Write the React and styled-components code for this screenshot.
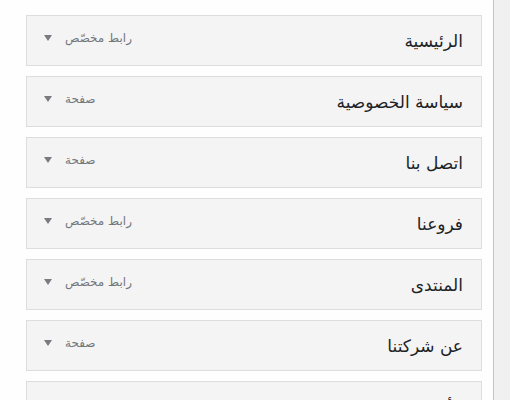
import React from 'react';
import styled, { createGlobalStyle } from 'styled-components';

const GlobalStyle = createGlobalStyle`
  html, body {
    margin: 0;
    padding: 0;
    background: #ffffff;
  }
  body {
    font-family: "DejaVu Sans", Tahoma, sans-serif;
  }
`;

const Page = styled.div`
  direction: rtl;
  display: flex;
  width: 510px;
  height: 400px;
  overflow: hidden;
`;

const SideStrip = styled.div`
  width: 16px;
  flex-shrink: 0;
  background: #f0f0f1;
  border-left: 1px solid #c3c4c7;
`;

const Content = styled.div`
  flex: 1;
  padding: 15px 11px 0 26px;
  background: #fefefe;
`;

const MenuList = styled.ul`
  list-style: none;
  margin: 0;
  padding: 0;
  display: flex;
  flex-direction: column;
  gap: 10px;
`;

const ItemHandle = styled.li`
  box-sizing: border-box;
  height: 51px;
  display: flex;
  align-items: flex-start;
  justify-content: space-between;
  padding: 0 18px 0 17px;
  background: #f4f4f4;
  border: 1px solid #dddddd;
`;

const ItemTitle = styled.span`
  font-size: 17px;
  font-weight: normal;
  color: #1d2327;
  line-height: 22px;
  margin-top: 14px;
`;

const ItemControls = styled.div`
  display: flex;
  align-items: center;
  gap: 13px;
  margin-top: 14px;
`;

const ItemType = styled.span`
  font-size: 12px;
  color: #72777c;
  line-height: 16px;
`;

const Arrow = styled.span`
  width: 0;
  height: 0;
  border-left: 4px solid transparent;
  border-right: 4px solid transparent;
  border-top: 6px solid #787c82;
`;

const items = [
  { title: 'الرئيسية', type: 'رابط مخصّص' },
  { title: 'سياسة الخصوصية', type: 'صفحة' },
  { title: 'اتصل بنا', type: 'صفحة' },
  { title: 'فروعنا', type: 'رابط مخصّص' },
  { title: 'المنتدى', type: 'رابط مخصّص' },
  { title: 'عن شركتنا', type: 'صفحة' },
  { title: 'الأخبار', type: 'صفحة' },
];

export default function App() {
  return (
    <>
      <GlobalStyle />
      <Page>
        <SideStrip />
        <Content>
          <MenuList>
            {items.map((item) => (
              <ItemHandle key={item.title}>
                <ItemTitle>{item.title}</ItemTitle>
                <ItemControls>
                  <ItemType>{item.type}</ItemType>
                  <Arrow />
                </ItemControls>
              </ItemHandle>
            ))}
          </MenuList>
        </Content>
      </Page>
    </>
  );
}
